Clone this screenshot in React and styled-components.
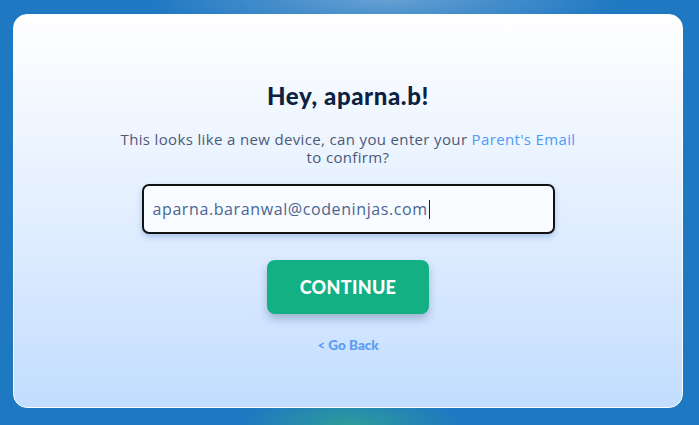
import React from 'react';
import styled, { createGlobalStyle } from 'styled-components';

const GlobalStyle = createGlobalStyle`
  html, body {
    margin: 0;
    padding: 0;
    height: 100%;
  }
  body {
    font-family: "Lato", "Open Sans", sans-serif;
  }
`;

const Screen = styled.div`
  width: 699px;
  height: 425px;
  box-sizing: border-box;
  padding: 14px 16px 17px 13px;
  background:
    radial-gradient(ellipse 110px 36px at 50% 100%, rgba(46, 160, 150, 0.9), rgba(46, 160, 150, 0) 100%),
    radial-gradient(ellipse 240px 38px at 55% 0%, rgba(120, 170, 215, 0.8), rgba(120, 170, 215, 0) 100%),
    #1f78c2;
  display: flex;
`;

const Card = styled.div`
  flex: 1;
  border-radius: 14px;
  border: 1.5px solid #ffffff;
  background: linear-gradient(180deg, #ffffff 0%, #e3efff 50%, #c2ddff 100%);
  display: flex;
  flex-direction: column;
  align-items: center;
  padding-top: 65px;
`;

const Title = styled.h1`
  margin: 0;
  font-family: "Lato", sans-serif;
  font-weight: 900;
  font-size: 24px;
  letter-spacing: 0.6px;
  line-height: 32px;
  color: #0c2242;
`;

const Message = styled.p`
  margin: 18px 0 0;
  font-family: "Open Sans", sans-serif;
  font-size: 15px;
  letter-spacing: 0.35px;
  line-height: 18px;
  color: #4c5a78;
  text-align: center;
`;

const Link = styled.span`
  color: #4c9cf6;
`;

const EmailInput = styled.div`
  margin-top: 18px;
  width: 413px;
  height: 50px;
  box-sizing: border-box;
  border: 2px solid #121212;
  border-radius: 7px;
  background: #f8fbff;
  box-shadow: 0 3px 6px rgba(70, 120, 200, 0.35);
  display: flex;
  align-items: center;
  padding-left: 9px;
  font-family: "Open Sans", sans-serif;
  font-size: 16px;
  letter-spacing: 0.6px;
  color: #4a6592;
`;

const Caret = styled.span`
  display: inline-block;
  width: 1px;
  height: 19px;
  background: #222;
  margin-left: 1px;
`;

const ContinueButton = styled.button`
  margin-top: 26px;
  width: 162px;
  height: 54px;
  border: none;
  border-radius: 8px;
  background: #12b083;
  color: #ffffff;
  font-family: "Lato", sans-serif;
  font-weight: 900;
  font-size: 18px;
  letter-spacing: 0.3px;
  box-shadow: 0 5px 8px rgba(40, 70, 110, 0.3);
  cursor: pointer;
`;

const BackLink = styled.a`
  margin-top: 23px;
  font-family: "Lato", sans-serif;
  font-weight: 900;
  font-size: 13.5px;
  color: #5a9cf2;
  text-decoration: none;
`;

export default function App() {
  return (
    <>
      <GlobalStyle />
      <Screen>
        <Card>
          <Title>Hey, aparna.b!</Title>
          <Message>
            This looks like a new device, can you enter your <Link>Parent's Email</Link>
            <br />
            to confirm?
          </Message>
          <EmailInput>
            aparna.baranwal@codeninjas.com
            <Caret />
          </EmailInput>
          <ContinueButton>CONTINUE</ContinueButton>
          <BackLink>&lt; Go Back</BackLink>
        </Card>
      </Screen>
    </>
  );
}
